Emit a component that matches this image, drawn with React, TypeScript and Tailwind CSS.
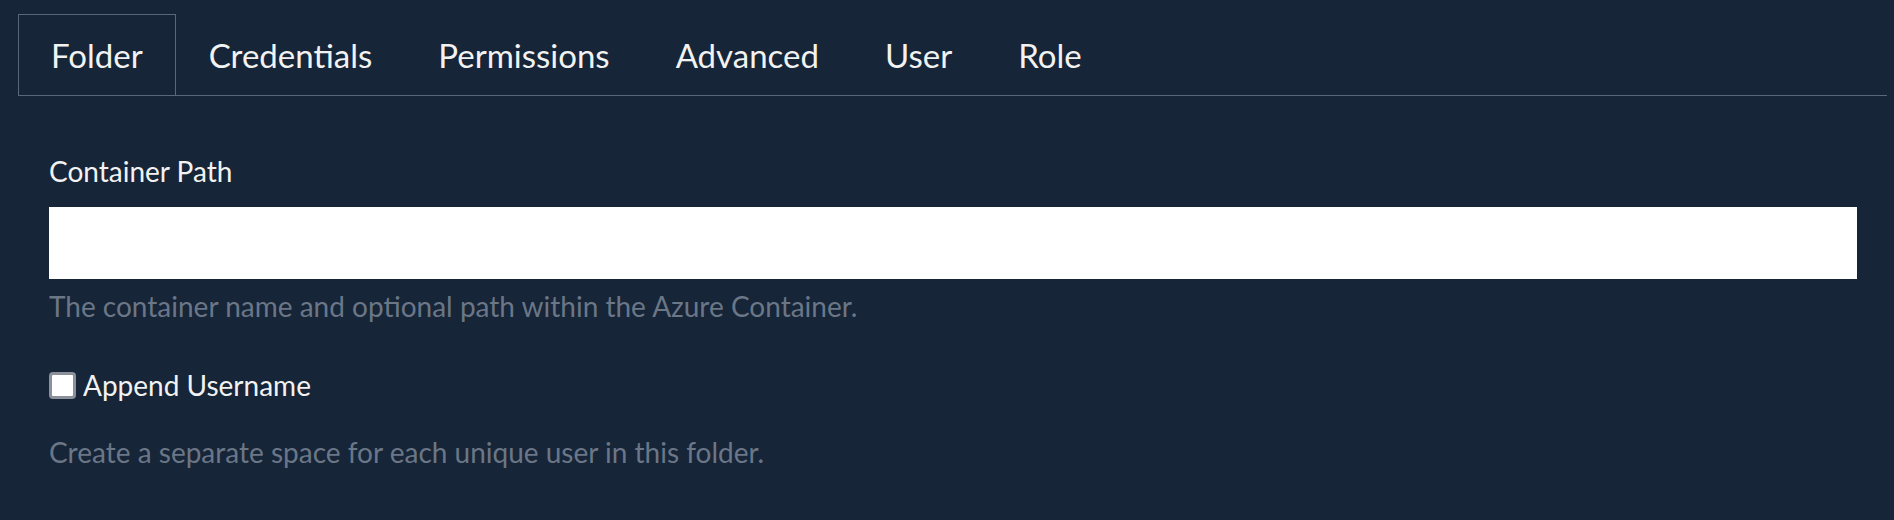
import React, { useState } from 'react';

const tabs = ['Folder', 'Credentials', 'Permissions', 'Advanced', 'User', 'Role'];

export default function App() {
  const [active, setActive] = useState('Folder');
  const [path, setPath] = useState('');
  const [appendUser, setAppendUser] = useState(false);

  return (
    <div className="min-h-screen bg-[#162537] pt-[14px] pl-[18px] pr-[7px] font-['Lato',sans-serif] text-[#f2f2f2]">
      <div className="flex border-b border-[#5b6678]">
        {tabs.map((t) => (
          <button
            key={t}
            onClick={() => setActive(t)}
            className={
              active === t
                ? 'h-[81px] px-[32px] border border-b-0 border-[#5b6678] text-[33px] leading-none'
                : 'h-[81px] px-[32px] border border-b-0 border-transparent text-[33px] leading-none'
            }
          >
            {t}
          </button>
        ))}
      </div>

      <div className="pl-[31px] pr-[30px] pt-[54px]">
        <label className="block text-[28px] leading-[42px] mb-[15px]">Container Path</label>
        <input
          type="text"
          value={path}
          onChange={(e) => setPath(e.target.value)}
          className="block w-full h-[72px] bg-white text-black text-[28px] px-3 outline-none"
        />
        <p className="mt-[6px] text-[28px] leading-[42px] text-[#6b7687]">
          The container name and optional path within the Azure Container.
        </p>

        <label className="mt-[37px] flex items-center h-[42px] text-[28px]">
          <input
            type="checkbox"
            checked={appendUser}
            onChange={(e) => setAppendUser(e.target.checked)}
            className="w-[27px] h-[27px] mr-[7px] appearance-none bg-white border-[3px] border-[#8c909b] rounded-[4px] checked:bg-blue-500"
          />
          Append Username
        </label>
        <p className="mt-[25px] text-[28px] leading-[42px] text-[#6b7687]">
          Create a separate space for each unique user in this folder.
        </p>
      </div>
    </div>
  );
}
